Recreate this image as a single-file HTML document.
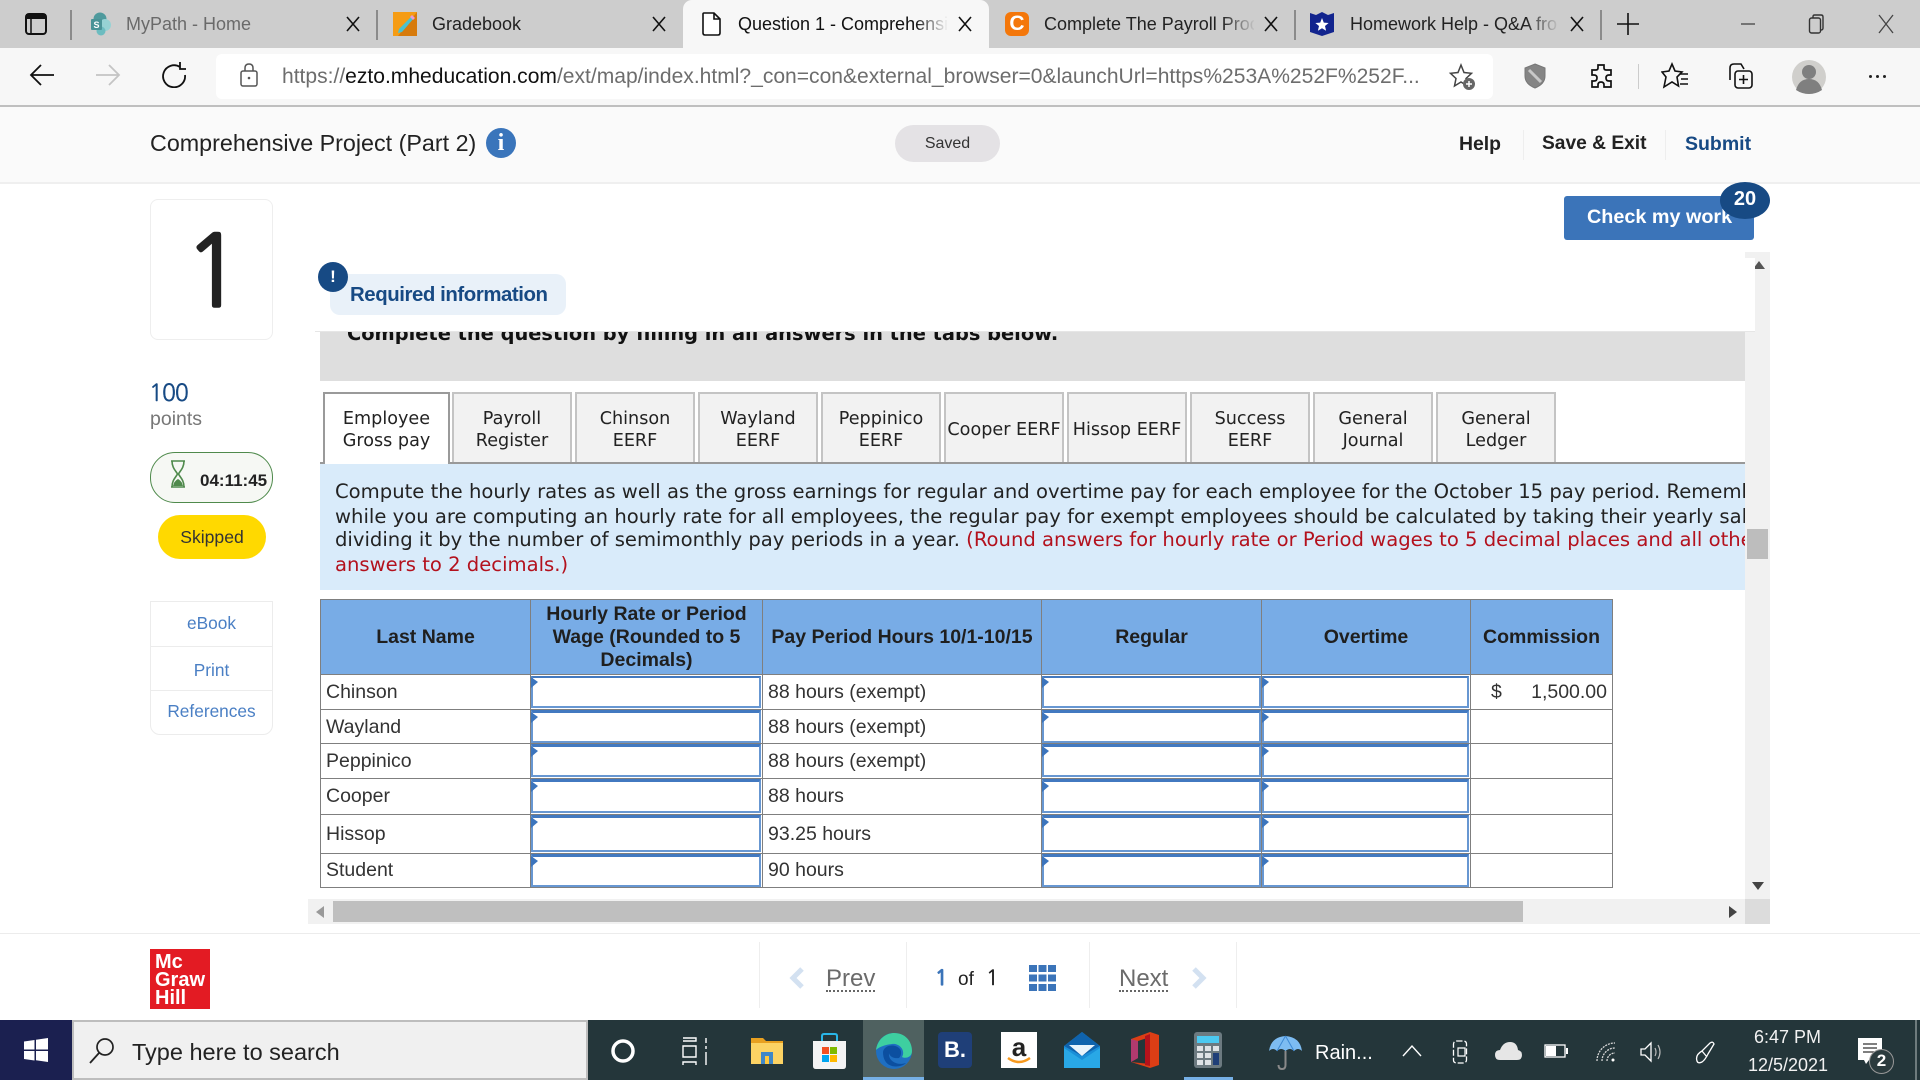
<!DOCTYPE html>
<html lang="en"><head><meta charset="utf-8"><title>Question 1 - Comprehensive Project</title>
<style>
html,body{margin:0;padding:0;width:1920px;height:1080px;overflow:hidden;background:#fff;font-family:"Liberation Sans",sans-serif;color:#222}
div,span,svg{box-sizing:border-box}
.a{position:absolute}
.t{position:absolute;white-space:nowrap}
.n{font-family:"NanumGothic","Liberation Sans",sans-serif}
.tb{font-size:18px;line-height:24px;top:12px;color:#333}
.sep{position:absolute;width:2px;background:#8b8b8b;top:10px;height:30px}
.x{position:absolute;top:14px}
.d{font-family:"DejaVu Sans",sans-serif}
.tab{position:absolute;top:392px;width:120px;height:70px;padding-top:3px;background:#f2f2f2;border:2px solid #c4c4c4;border-bottom:0;font:17.6px/22px "DejaVu Sans",sans-serif;color:#222;text-align:center;display:flex;align-items:center;justify-content:center}
.l{position:absolute;left:335px;width:1410px;overflow:hidden;white-space:nowrap;font:19.6px/24px "DejaVu Sans",sans-serif;color:#222}
.r{color:#b3111d}
table{position:absolute;left:320px;top:599px;border-collapse:collapse;table-layout:fixed;width:1292px;font-size:19.5px;color:#333}
td,th{border:1px solid #7f7f7f;padding:0 5px;overflow:hidden;white-space:nowrap}
th{background:#78ace6;font-size:19.5px;line-height:23px;color:#1f1f1f;text-align:center;padding:0 2px}
.i{position:absolute;background:#fff;border:2px solid #6797d2;border-top:3px solid #4279c0}
.i:before{content:"";position:absolute;left:-2px;top:-1px;border-left:7px solid #3c75bd;border-top:5px solid transparent;border-bottom:6px solid transparent}
.ml{position:absolute;left:150px;width:123px;text-align:center;color:#4a7fc4;font-size:17.3px;line-height:22px}
.di{position:absolute;top:942px;width:1px;height:66px;background:#eee}
</style></head><body>

<!-- tab strip -->
<div class="a" style="left:0;top:0;width:1920px;height:48px;background:#cdcdcd"></div>
<div class="a" style="left:683px;top:0;width:306px;height:48px;background:#f7f7f7;border-radius:9px 9px 0 0"></div>
<svg class="a" style="left:25px;top:13px" width="22" height="22" viewBox="0 0 22 22"><rect x="1" y="1" width="20" height="20" rx="3" fill="none" stroke="#111" stroke-width="2"/><rect x="1" y="1" width="20" height="5" fill="#111"/><line x1="6" y1="6" x2="6" y2="21" stroke="#111" stroke-width="1.5"/></svg>
<div class="sep" style="left:70px"></div><div class="sep" style="left:376px"></div><div class="sep" style="left:1294px"></div><div class="sep" style="left:1600px"></div>

<svg class="a" style="left:88px;top:12px" width="24" height="24" viewBox="0 0 24 24"><circle cx="12" cy="7" r="6.5" fill="#4f9a9d"/><circle cx="17" cy="13" r="6" fill="#96d2d4"/><circle cx="13" cy="19" r="4.5" fill="#6cbcc0"/><rect x="3" y="7" width="11" height="11" rx="1" fill="#4a9397"/><text x="8.500" y="16" font-size="9" font-weight="bold" fill="#fff" text-anchor="middle" font-family="Liberation Sans">S</text></svg>
<div class="t tb" style="left:126px;color:#6a6a6a">MyPath - Home</div>
<svg class="x" style="left:346px" width="14" height="20" viewBox="0 0 14 20"><path d="M1 3L13 17M13 3L1 17" stroke="#111" stroke-width="1.6" fill="none"/></svg>

<svg class="a" style="left:393px;top:12px" width="24" height="24" viewBox="0 0 24 24"><rect width="24" height="24" fill="#f59c14"/><path d="M24 0V24H5z" fill="#d77b0c"/><path d="M19 4L21 6 9 20 5 21 6 17z" fill="#4ac2cf"/><path d="M19 3L22 6 20 8 17 5z" fill="#e89ad6"/></svg>
<div class="t tb" style="left:432px;color:#222">Gradebook</div>
<svg class="x" style="left:652px" width="14" height="20" viewBox="0 0 14 20"><path d="M1 3L13 17M13 3L1 17" stroke="#111" stroke-width="1.6" fill="none"/></svg>

<svg class="a" style="left:702px;top:12px" width="19" height="24" viewBox="0 0 19 24"><path d="M2 1H12L18 7V21Q18 23 16 23H3Q1 23 1 21V2Q1 1 2 1ZM12 1V7H18" fill="#fff" stroke="#111" stroke-width="1.6"/></svg>
<div class="t tb" style="left:738px;color:#111;width:210px;overflow:hidden">Question 1 - Comprehensi</div>
<div class="a" style="left:915px;top:10px;width:33px;height:28px;background:linear-gradient(90deg,rgba(247,247,247,0),#f7f7f7)"></div>
<svg class="x" style="left:958px" width="14" height="20" viewBox="0 0 14 20"><path d="M1 3L13 17M13 3L1 17" stroke="#111" stroke-width="1.6" fill="none"/></svg>

<div class="a" style="left:1005px;top:12px;width:24px;height:24px;background:#f4770a;border-radius:6px;color:#fff;font:bold 21px/24px 'Liberation Sans',sans-serif;text-align:center">C</div>
<div class="t tb" style="left:1044px;width:210px;overflow:hidden;color:#222">Complete The Payroll Proc</div>
<div class="a" style="left:1222px;top:10px;width:34px;height:28px;background:linear-gradient(90deg,rgba(205,205,205,0),#cdcdcd)"></div>
<svg class="x" style="left:1264px" width="14" height="20" viewBox="0 0 14 20"><path d="M1 3L13 17M13 3L1 17" stroke="#111" stroke-width="1.6" fill="none"/></svg>

<svg class="a" style="left:1310px;top:12px" width="24" height="24" viewBox="0 0 24 24"><path d="M0 1L6 3 12 0 18 3 24 1V20L12 24 0 20z" fill="#12248e"/><path d="M12 6L13.8 10.6 18.6 11 15 14 16.1 18.7 12 16.2 7.9 18.7 9 14 5.4 11 10.2 10.6z" fill="#fff"/></svg>
<div class="t tb" style="left:1350px;width:208px;overflow:hidden;color:#222">Homework Help - Q&amp;A fro</div>
<div class="a" style="left:1526px;top:10px;width:34px;height:28px;background:linear-gradient(90deg,rgba(205,205,205,0),#cdcdcd)"></div>
<svg class="x" style="left:1570px" width="14" height="20" viewBox="0 0 14 20"><path d="M1 3L13 17M13 3L1 17" stroke="#111" stroke-width="1.6" fill="none"/></svg>

<svg class="a" style="left:1617px;top:13px" width="22" height="22" viewBox="0 0 22 22"><path d="M11 0V22M0 11H22" stroke="#111" stroke-width="1.6"/></svg>
<svg class="a" style="left:1740px;top:20px" width="16" height="8"><path d="M1 4H15" stroke="#444" stroke-width="1.3"/></svg>
<svg class="a" style="left:1808px;top:14px" width="18" height="20" viewBox="0 0 18 20"><rect x="1.5" y="4" width="11" height="15" rx="2" fill="none" stroke="#333" stroke-width="1.4"/><path d="M5 4V2.5Q5 1 6.5 1H13Q15 1 15 3V14Q15 16 13 16" fill="none" stroke="#333" stroke-width="1.4"/></svg>
<svg class="a" style="left:1877px;top:14px" width="18" height="20" viewBox="0 0 18 20"><path d="M2 1L16 19M16 1L2 19" stroke="#444" stroke-width="1.3"/></svg>

<!-- toolbar -->
<div class="a" style="left:0;top:48px;width:1920px;height:57px;background:#f7f7f7"></div>
<div class="a" style="left:0;top:105px;width:1920px;height:2px;background:#bfbfbf"></div>
<div class="a" style="left:216px;top:54px;width:1277px;height:45px;background:#fff;border-radius:6px"></div>
<svg class="a" style="left:29px;top:62px" width="26" height="26" viewBox="0 0 26 26"><path d="M25 13H2M12 3L2 13 12 23" fill="none" stroke="#111" stroke-width="1.8"/></svg>
<svg class="a" style="left:95px;top:62px" width="26" height="26" viewBox="0 0 26 26"><path d="M1 13H24M14 3L24 13 14 23" fill="none" stroke="#c4c4c4" stroke-width="1.8"/></svg>
<svg class="a" style="left:161px;top:62px" width="26" height="26" viewBox="0 0 26 26"><path d="M19 5A11 11 0 1 0 24 13M19 0V7H25" fill="none" stroke="#111" stroke-width="1.8"/></svg>
<svg class="a" style="left:240px;top:63px" width="18" height="24" viewBox="0 0 18 24"><rect x="1" y="8" width="16" height="15" rx="2" fill="none" stroke="#555" stroke-width="1.5"/><path d="M5 8V5Q5 1 9 1T13 5V8" fill="none" stroke="#555" stroke-width="1.5"/><circle cx="9" cy="15" r="1.3" fill="#555"/></svg>
<div class="t" style="left:282px;top:63px;font-size:21.06px;line-height:28px;color:#6d6d6d"><span>https://</span><span style="color:#111">ezto.mheducation.com</span>/ext/map/index.html?_con=con&amp;external_browser=0&amp;launchUrl=https%253A%252F%252F...</div>
<svg class="a" style="left:1448px;top:63px" width="28" height="28" viewBox="0 0 28 28"><path d="M13 2L16 9.5 23.5 10.3 18 15.5 19.5 23 13 19 6.5 23 8 15.5 2.5 10.3 10 9.5z" fill="none" stroke="#444" stroke-width="1.5"/><circle cx="21" cy="21" r="6" fill="#666"/><path d="M21 18V24M18 21H24" stroke="#fff" stroke-width="1.5"/></svg>
<svg class="a" style="left:1524px;top:63px" width="22" height="26" viewBox="0 0 22 26"><path d="M11 1L21 5V13Q21 21 11 25 1 21 1 13V5z" fill="#858585" stroke="#777"/><path d="M5 7L17 19" stroke="#c8c8c8" stroke-width="3"/></svg>
<svg class="a" style="left:1589px;top:63px" width="24" height="26" viewBox="0 0 24 26"><path d="M9 2H15V5Q15 7 17 7H22V12H20Q17 12 17 15T20 18H22V24H15V22Q15 19 12 19T9 22V24H3V18H5Q8 18 8 15T5 12H3V7H7Q9 7 9 5z" fill="none" stroke="#111" stroke-width="1.7"/></svg>
<div class="a" style="left:1638px;top:64px;width:1px;height:25px;background:#ccc"></div>
<svg class="a" style="left:1661px;top:62px" width="28" height="28" viewBox="0 0 28 28"><path d="M11 2L14 9 21 10 16 15 17.5 24 11 20 3 25 5 15 1 10 8 9z" fill="none" stroke="#111" stroke-width="1.6"/><path d="M19 12H27M20 17H27M19 22H27" stroke="#111" stroke-width="1.5"/></svg>
<svg class="a" style="left:1727px;top:62px" width="26" height="28" viewBox="0 0 26 28"><path d="M3 18V6Q3 2 7 2H14L17 7" fill="none" stroke="#111" stroke-width="1.6"/><rect x="8" y="9" width="17" height="17" rx="3" fill="#f7f7f7" stroke="#111" stroke-width="1.6"/><path d="M16.5 13V22M12 17.500H21" stroke="#111" stroke-width="1.6"/></svg>
<svg class="a" style="left:1792px;top:60px" width="34" height="34" viewBox="0 0 34 34"><circle cx="17" cy="17" r="17" fill="#d0cfcc"/><circle cx="17" cy="12" r="7" fill="#7f7f7f"/><path d="M4 30Q7 19 17 19T30 30Q24 34 17 34T4 30" fill="#7f7f7f"/></svg>
<div class="a" style="left:1869px;top:75px;width:3px;height:3px;background:#222;border-radius:2px;box-shadow:7px 0 0 #222,14px 0 0 #222"></div>

<!-- header -->
<div class="a" style="left:0;top:107px;width:1920px;height:77px;background:#fafafa;border-bottom:2px solid #efefef"></div>
<div class="t" style="left:150px;top:129px;font-size:23.3px;line-height:28px;color:#222">Comprehensive Project (Part 2)</div>
<div class="a" style="left:486px;top:128px;width:30px;height:30px;border-radius:50%;background:#3a75bb;color:#fff;font:bold 24px/30px 'Liberation Serif',serif;text-align:center">i</div>
<div class="a" style="left:895px;top:125px;width:105px;height:37px;border-radius:19px;background:#e4e2e5;font-size:16px;line-height:38px;text-align:center;color:#333">Saved</div>
<div class="t" style="left:1459px;top:132px;font-size:19.4px;font-weight:bold;line-height:24px;color:#222">Help</div>
<div class="a" style="left:1523px;top:130px;width:1px;height:30px;background:#eee"></div>
<div class="t" style="left:1542px;top:132px;font-size:19.2px;font-weight:bold;line-height:24px;color:#222">Save &amp; Exit</div>
<div class="a" style="left:1665px;top:130px;width:1px;height:30px;background:#eee"></div>
<div class="t" style="left:1685px;top:132px;font-size:19.5px;font-weight:bold;line-height:24px;color:#174a84">Submit</div>

<!-- check my work -->
<div class="a" style="left:1564px;top:196px;width:190px;height:44px;background:#3b74b9;border-radius:3px"></div>
<div class="t" style="left:1587px;top:204px;font-size:19.8px;font-weight:bold;line-height:26px;color:#fff">Check my work</div>
<div class="a" style="left:1720px;top:182px;width:50px;height:37px;border-radius:50%;background:#174a84;color:#fff;font-size:20px;font-weight:bold;line-height:35px;text-align:center">20</div>

<!-- left column -->
<div class="a" style="left:150px;top:199px;width:123px;height:141px;background:#fff;border:1px solid #eee;border-radius:8px"></div>
<div class="t n" style="left:152px;width:123px;text-align:center;top:212px;font-size:98px;line-height:120px;color:#222;-webkit-text-stroke:2.5px #222">1</div>
<div class="t n" style="left:149px;top:380px;font-size:23px;letter-spacing:-1px;line-height:28px;color:#174a84;-webkit-text-stroke:.4px #174a84">100</div>
<div class="t" style="left:150px;top:407px;font-size:19.500px;line-height:24px;color:#777">points</div>
<div class="a" style="left:150px;top:452px;width:123px;height:51px;background:#f6f8f4;border:1px solid #4f8a4c;border-radius:25px"></div>
<svg class="a" style="left:169px;top:460px" width="18" height="28" viewBox="0 0 18 28"><path d="M2 1H16M2 27H16M3 1C3 8 7 11 8.500 14 7 17 3 20 3 27M15 1C15 8 11 11 9.500 14 11 17 15 20 15 27" fill="none" stroke="#4f8a4c" stroke-width="1.6"/><path d="M4 26Q5 21 9 19 13 21 14 26z" fill="#4f8a4c"/></svg>
<div class="t" style="left:200px;top:470px;font-size:17px;font-weight:bold;line-height:22px;color:#222">04:11:45</div>
<div class="a" style="left:158px;top:515px;width:108px;height:44px;background:#ffd900;border-radius:22px;font-size:17.600px;line-height:44px;text-align:center;color:#333">Skipped</div>
<div class="a" style="left:150px;top:601px;width:123px;height:134px;border:1px solid #ececec;border-radius:0 0 10px 10px"></div>
<div class="a" style="left:150px;top:646px;width:123px;height:1px;background:#ececec"></div>
<div class="a" style="left:150px;top:690px;width:123px;height:1px;background:#ececec"></div>
<div class="ml" style="top:612px">eBook</div>
<div class="ml" style="top:659px">Print</div>
<div class="ml" style="top:700px">References</div>

<!-- scrollbars -->
<div class="a" style="left:1745px;top:252px;width:25px;height:672px;background:#f1f1f1"></div>
<svg class="a" style="left:1753px;top:261px" width="12" height="8"><path d="M6 0L12 8H0z" fill="#555"/></svg>
<div class="a" style="left:1747px;top:529px;width:21px;height:30px;background:#bdbdbd"></div>
<svg class="a" style="left:1752px;top:882px" width="12" height="8"><path d="M0 0H12L6 8z" fill="#444"/></svg>

<!-- question body -->
<div class="a" style="left:320px;top:331px;width:1425px;height:50px;background:#dedede;overflow:hidden"></div>
<div class="t d" style="left:347px;top:322px;width:900px;font-weight:bold;font-size:19.4px;line-height:24px;color:#111;height:24px">Complete the question by filling in all answers in the tabs below.</div>
<div class="a" style="left:315px;top:258px;width:1440px;height:74px;background:#fff;border-bottom:1px solid #e6e6e6"></div>
<div class="a" style="left:330px;top:274px;width:236px;height:41px;background:#e9f1f9;border-radius:10px"></div>
<div class="a" style="left:318px;top:262px;width:30px;height:30px;border-radius:50%;background:#174a84;color:#fff;font-size:17px;font-weight:bold;line-height:30px;text-align:center">!</div>
<div class="t" style="left:350px;top:282px;font-size:20.4px;letter-spacing:-.43px;font-weight:bold;line-height:26px;color:#174a84">Required information</div>

<!-- tabs -->
<div class="a" style="left:320px;top:462px;width:1425px;height:2px;background:#999"></div>
<div class="tab" style="left:323px;width:127px;background:#fff;height:72px;padding-top:1px;border-color:#9a9a9a;z-index:2">Employee<br>Gross pay</div>
<div class="tab" style="left:452px">Payroll<br>Register</div>
<div class="tab" style="left:575px">Chinson<br>EERF</div>
<div class="tab" style="left:698px">Wayland<br>EERF</div>
<div class="tab" style="left:821px">Peppinico<br>EERF</div>
<div class="tab" style="left:944px">Cooper EERF</div>
<div class="tab" style="left:1067px">Hissop EERF</div>
<div class="tab" style="left:1190px">Success<br>EERF</div>
<div class="tab" style="left:1313px">General<br>Journal</div>
<div class="tab" style="left:1436px">General<br>Ledger</div>

<!-- instructions -->
<div class="a" style="left:320px;top:464px;width:1425px;height:126px;background:#d9ebfa"></div>
<div class="l" style="top:480px">Compute the hourly rates as well as the gross earnings for regular and overtime pay for each employee for the October 15 pay period. Remember that</div>
<div class="l" style="top:505px">while you are computing an hourly rate for all employees, the regular pay for exempt employees should be calculated by taking their yearly salary and</div>
<div class="l" style="top:528px">dividing it by the number of semimonthly pay periods in a year. <span class="r">(Round answers for hourly rate or Period wages to 5 decimal places and all other</span></div>
<div class="l r" style="top:553px">answers to 2 decimals.)</div>

<!-- table -->
<table>
<colgroup><col style="width:210px"><col style="width:232px"><col style="width:279px"><col style="width:220px"><col style="width:209px"><col style="width:142px"></colgroup>
<tr style="height:75px"><th>Last Name</th><th>Hourly Rate or Period<br>Wage (Rounded to 5<br>Decimals)</th><th>Pay Period Hours 10/1-10/15</th><th>Regular</th><th>Overtime</th><th>Commission</th></tr>
<tr style="height:35px"><td>Chinson</td><td></td><td>88 hours (exempt)</td><td></td><td></td><td><span style="margin-left:15px">$</span><span style="float:right">1,500.00</span></td></tr>
<tr style="height:34px"><td style="padding-top:2px">Wayland</td><td></td><td style="padding-top:2px">88 hours (exempt)</td><td></td><td></td><td></td></tr>
<tr style="height:35px"><td>Peppinico</td><td></td><td>88 hours (exempt)</td><td></td><td></td><td></td></tr>
<tr style="height:36px"><td>Cooper</td><td></td><td>88 hours</td><td></td><td></td><td></td></tr>
<tr style="height:39px"><td>Hissop</td><td></td><td>93.25 hours</td><td></td><td></td><td></td></tr>
<tr style="height:34px"><td>Student</td><td></td><td>90 hours</td><td></td><td></td><td></td></tr>
</table>

<div class="i" style="left:531px;top:676px;width:230px;height:32px;border-top-width:2px"></div><div class="i" style="left:1042px;top:676px;width:219px;height:32px;border-top-width:2px"></div><div class="i" style="left:1262px;top:676px;width:207px;height:32px;border-top-width:2px"></div>
<div class="i" style="left:531px;top:710px;width:230px;height:33px"></div><div class="i" style="left:1042px;top:710px;width:219px;height:33px"></div><div class="i" style="left:1262px;top:710px;width:207px;height:33px"></div>
<div class="i" style="left:531px;top:744px;width:230px;height:33px"></div><div class="i" style="left:1042px;top:744px;width:219px;height:33px"></div><div class="i" style="left:1262px;top:744px;width:207px;height:33px"></div>
<div class="i" style="left:531px;top:779px;width:230px;height:34px"></div><div class="i" style="left:1042px;top:779px;width:219px;height:34px"></div><div class="i" style="left:1262px;top:779px;width:207px;height:34px"></div>
<div class="i" style="left:531px;top:815px;width:230px;height:37px"></div><div class="i" style="left:1042px;top:815px;width:219px;height:37px"></div><div class="i" style="left:1262px;top:815px;width:207px;height:37px"></div>
<div class="i" style="left:531px;top:854px;width:230px;height:33px"></div><div class="i" style="left:1042px;top:854px;width:219px;height:33px"></div><div class="i" style="left:1262px;top:854px;width:207px;height:33px"></div>

<!-- horizontal scrollbar -->
<div class="a" style="left:308px;top:899px;width:1437px;height:25px;background:#f1f1f1"></div>
<div class="a" style="left:333px;top:901px;width:1190px;height:21px;background:#bfbfbf"></div>
<div class="a" style="left:1745px;top:899px;width:25px;height:25px;background:#dcdcdc"></div>
<svg class="a" style="left:316px;top:906px" width="8" height="12"><path d="M8 0V12L0 6z" fill="#999"/></svg>
<svg class="a" style="left:1729px;top:906px" width="8" height="12"><path d="M0 0V12L8 6z" fill="#444"/></svg>

<!-- footer -->
<div class="a" style="left:0;top:933px;width:1920px;height:1px;background:#ececec"></div>
<div class="a" style="left:150px;top:949px;width:60px;height:60px;background:#e31b23;color:#fff;font-size:20px;font-weight:bold;line-height:18px;padding:4px 0 0 5px">Mc<br>Graw<br>Hill</div>
<div class="di" style="left:759px"></div><div class="di" style="left:906px"></div><div class="di" style="left:1089px"></div><div class="di" style="left:1236px"></div>
<svg class="a" style="left:789px;top:967px" width="16" height="22" viewBox="0 0 16 22"><path d="M13 2L4 11 13 20" fill="none" stroke="#d3e1f1" stroke-width="5"/></svg>
<div class="t" style="left:826px;top:965px;font-size:24px;line-height:28px;color:#6b6b6b;border-bottom:2px dotted #666;height:27px">Prev</div>
<div class="t n" style="left:935px;top:966px;font-size:21px;line-height:26px;color:#3b74b9;-webkit-text-stroke:1.2px #3b74b9">1</div>
<div class="t" style="left:958px;top:967px;font-size:19px;line-height:26px;color:#222">of</div>
<div class="t n" style="left:986px;top:966px;font-size:21px;line-height:26px;color:#222;-webkit-text-stroke:.4px #222">1</div>
<svg class="a" style="left:1029px;top:965px" width="27" height="26"><g fill="#3b74b9"><rect width="8" height="7"/><rect x="9.500" width="8" height="7"/><rect x="19" width="8" height="7"/><rect y="9.500" width="8" height="7"/><rect x="9.500" y="9.500" width="8" height="7"/><rect x="19" y="9.500" width="8" height="7"/><rect y="19" width="8" height="7"/><rect x="9.500" y="19" width="8" height="7"/><rect x="19" y="19" width="8" height="7"/></g></svg>
<div class="t" style="left:1119px;top:965px;font-size:24px;line-height:28px;color:#6b6b6b;border-bottom:2px dotted #666;height:27px">Next</div>
<svg class="a" style="left:1191px;top:967px" width="16" height="22" viewBox="0 0 16 22"><path d="M3 2L12 11 3 20" fill="none" stroke="#d3e1f1" stroke-width="5"/></svg>

<!-- taskbar -->
<div class="a" style="left:0;top:1020px;width:1920px;height:60px;background:#24363a"></div>
<div class="a" style="left:0;top:1020px;width:72px;height:60px;background:#1b2050"></div>
<svg class="a" style="left:24px;top:1038px" width="24" height="24" viewBox="0 0 24 24"><path d="M0 3.500L10.500 2V11.500H0zM12 1.800L24 0V11.500H12zM0 13H10.500V22.500L0 21zM12 13H24V24L12 22.300z" fill="#fff"/></svg>
<div class="a" style="left:72px;top:1020px;width:516px;height:60px;background:#f0f0f0;border:2px solid #bdbdbd"></div>
<svg class="a" style="left:89px;top:1037px" width="27" height="27" viewBox="0 0 27 27"><circle cx="16" cy="10" r="8" fill="none" stroke="#222" stroke-width="1.7"/><path d="M10 16L1 26" stroke="#222" stroke-width="1.8"/></svg>
<div class="t" style="left:132px;top:1038px;font-size:23.500px;line-height:28px;color:#222">Type here to search</div>
<svg class="a" style="left:610px;top:1038px" width="26" height="26"><circle cx="13" cy="13" r="10" fill="none" stroke="#fff" stroke-width="3.500"/></svg>
<svg class="a" style="left:682px;top:1037px" width="26" height="28" viewBox="0 0 26 28"><path d="M1 1H14V4H1M1 9H14V20H1zM1 28V25H14V28" fill="none" stroke="#fff" stroke-width="1.4"/><path d="M24 1V6M24 9V12M24 15V28" stroke="#fff" stroke-width="1.4"/></svg>
<svg class="a" style="left:751px;top:1036px" width="32" height="28" viewBox="0 0 32 28"><path d="M0 2H12L15 5H32V28H0z" fill="#e8a020"/><path d="M0 7H32V28H0z" fill="#fcd364"/><path d="M10 16H22V28H18V20H14V28H10z" fill="#3f87c8"/><rect x="14" y="20" width="4" height="8" fill="#ffc83d"/></svg>
<svg class="a" style="left:811px;top:1033px" width="37" height="36" viewBox="0 0 37 36"><path d="M2 8H35V33Q35 36 32 36H5Q2 36 2 33z" fill="#f4f4f4"/><path d="M11 8V3Q11 1 13 1H24Q26 1 26 3V8" fill="none" stroke="#29b6e8" stroke-width="2"/><rect x="11" y="14" width="7" height="7" fill="#f25022"/><rect x="19" y="14" width="7" height="7" fill="#7fba00"/><rect x="11" y="22" width="7" height="7" fill="#00a4ef"/><rect x="19" y="22" width="7" height="7" fill="#ffb900"/></svg>
<div class="a" style="left:863px;top:1020px;width:61px;height:60px;background:#4f6160"></div>
<div class="a" style="left:863px;top:1077px;width:61px;height:3px;background:#76b0e6"></div>
<svg class="a" style="left:875px;top:1032px" width="38" height="38" viewBox="0 0 38 38"><circle cx="19" cy="19" r="18" fill="#1f6fc2"/><path d="M1 18C3 5 13 1 19 1 30 1 37 9 37 19 37 25 31 27 27 25 31 18 24 11 17 12 8 13 3 16 1 18z" fill="#3ecfa0"/><path d="M8 20C9 13 20 11 25 17 27 20 26 24 24 26 16 27 14 22 14 21 13 29 22 34 31 31 26 36 8 38 8 20z" fill="#0c4fa0"/></svg>
<div class="a" style="left:938px;top:1032px;width:34px;height:36px;background:#1f3f78;border-radius:4px;color:#fff;font:bold 22px/36px 'Liberation Sans',sans-serif;text-align:center">B.</div>
<div class="a" style="left:1001px;top:1032px;width:36px;height:36px;background:#fff;color:#222;font:bold 26px/30px 'Liberation Sans',sans-serif;text-align:center">a</div>
<svg class="a" style="left:1006px;top:1056px" width="26" height="10"><path d="M2 2Q13 10 24 2" fill="none" stroke="#f79a1f" stroke-width="2.500"/></svg>
<svg class="a" style="left:1064px;top:1032px" width="36" height="36" viewBox="0 0 36 36"><path d="M0 14L18 0 36 14V36H0z" fill="#1a8fd8"/><path d="M0 14L18 0 36 14 18 24z" fill="#0f63ad"/><path d="M5 13H31L18 24z" fill="#e8f3fb"/><path d="M0 16L18 28 36 16V36H0z" fill="#29a8e6"/></svg>
<svg class="a" style="left:1131px;top:1032px" width="28" height="36" viewBox="0 0 28 36"><path d="M0 7L19 0 28 3V33L19 36 0 30 19 32V5L7 9V26L0 30z" fill="#dc3e15"/><path d="M0 7L7 9V26L0 30z" fill="#b03a6e"/><path d="M14 4L19 2V34L14 33z" fill="#b5121b"/></svg>
<svg class="a" style="left:1194px;top:1032px" width="28" height="36" viewBox="0 0 28 36"><rect width="28" height="36" rx="3" fill="#6c7a80"/><rect x="3" y="4" width="22" height="7" fill="#4cc9f0"/><g fill="#dfe3e6"><rect x="3" y="14" width="6" height="5"/><rect x="11" y="14" width="6" height="5"/><rect x="19" y="14" width="6" height="5"/><rect x="3" y="21" width="6" height="5"/><rect x="11" y="21" width="6" height="5"/><rect x="3" y="28" width="6" height="5"/><rect x="11" y="28" width="6" height="5"/></g><rect x="19" y="21" width="6" height="12" fill="#1f3f78"/></svg>
<div class="a" style="left:1184px;top:1077px;width:49px;height:3px;background:#76b0e6"></div>
<svg class="a" style="left:1268px;top:1034px" width="35" height="36" viewBox="0 0 35 36"><path d="M1 17Q3 3 17.500 2 32 3 34 17 30 13 26 17 22 13 17.500 17 13 13 9 17 5 13 1 17z" fill="#7dbcf2"/><path d="M17.500 2L9 17M17.500 2L26 17" stroke="#3d89d4" stroke-width="1"/><path d="M17.500 17V31Q17.500 35 14 35T10.500 31" fill="none" stroke="#8a8a8a" stroke-width="2"/></svg>
<div class="t" style="left:1315px;top:1040px;font-size:20px;line-height:26px;color:#fff">Rain...</div>
<svg class="a" style="left:1402px;top:1044px" width="20" height="13"><path d="M1 12L10 2 19 12" fill="none" stroke="#fff" stroke-width="1.400"/></svg>
<svg class="a" style="left:1452px;top:1038px" width="18" height="28" viewBox="0 0 18 28"><rect x="1.500" y="3" width="13" height="22" rx="3" fill="none" stroke="#fff" stroke-width="1.300" stroke-dasharray="6 2"/><path d="M6 10H13V18H6z" fill="#24363a" stroke="#fff" stroke-width="1.200"/></svg>
<svg class="a" style="left:1495px;top:1041px" width="27" height="20" viewBox="0 0 27 20"><path d="M5 19Q0 19 0 14 0 9 5 9 8 1 15 1 22 1 23 9 27 10 27 14 27 19 22 19z" fill="#e6e6e6"/></svg>
<svg class="a" style="left:1544px;top:1044px" width="24" height="14"><rect x="1" y="1" width="20" height="12" fill="none" stroke="#fff" stroke-width="1.300"/><rect x="2" y="2" width="10" height="10" fill="#fff"/><rect x="22" y="4" width="2" height="6" fill="#fff"/></svg>
<svg class="a" style="left:1596px;top:1042px" width="20" height="20" viewBox="0 0 20 20"><path d="M1 19A18 18 0 0 1 19 1M6 19A13 13 0 0 1 19 6M11 19A8 8 0 0 1 19 11" fill="none" stroke="#d6d6d6" stroke-width="1.300" stroke-dasharray="2 1"/><circle cx="17" cy="18" r="1.500" fill="#fff"/></svg>
<svg class="a" style="left:1640px;top:1040px" width="24" height="24" viewBox="0 0 24 24"><path d="M1 9H5L11 3V21L5 15H1z" fill="none" stroke="#fff" stroke-width="1.300"/><path d="M15 8Q17 12 15 16M18 5Q22 12 18 19" fill="none" stroke="#bbb" stroke-width="1.200"/></svg>
<svg class="a" style="left:1695px;top:1040px" width="22" height="24" viewBox="0 0 22 24"><path d="M2 21Q0 15 7 11L15 3Q18 1 19 4L13 14Q10 20 7 22 3 24 2 21M7 11L12 17" fill="none" stroke="#fff" stroke-width="1.300"/></svg>
<div class="t" style="left:1754px;top:1025px;width:67px;text-align:center;font-size:18px;line-height:24px;color:#f2f2f2">6:47 PM</div>
<div class="t" style="left:1746px;top:1053px;width:84px;text-align:center;font-size:18px;line-height:24px;color:#f2f2f2">12/5/2021</div>
<svg class="a" style="left:1858px;top:1036px" width="30" height="30" viewBox="0 0 30 30"><path d="M0 2H24V24H11L8 28 6 24H0z" fill="#fff"/><path d="M5 8H19M5 12H19M5 16H16" stroke="#333" stroke-width="1.300"/></svg>
<div class="a" style="left:1869px;top:1049px;width:25px;height:25px;border-radius:50%;background:#2b3b3e;border:1.500px solid #999;color:#fff;font-size:17px;font-weight:bold;line-height:22px;text-align:center">2</div>
<div class="a" style="left:1915px;top:1020px;width:2px;height:60px;background:#6e7b7d"></div>

</body></html>
